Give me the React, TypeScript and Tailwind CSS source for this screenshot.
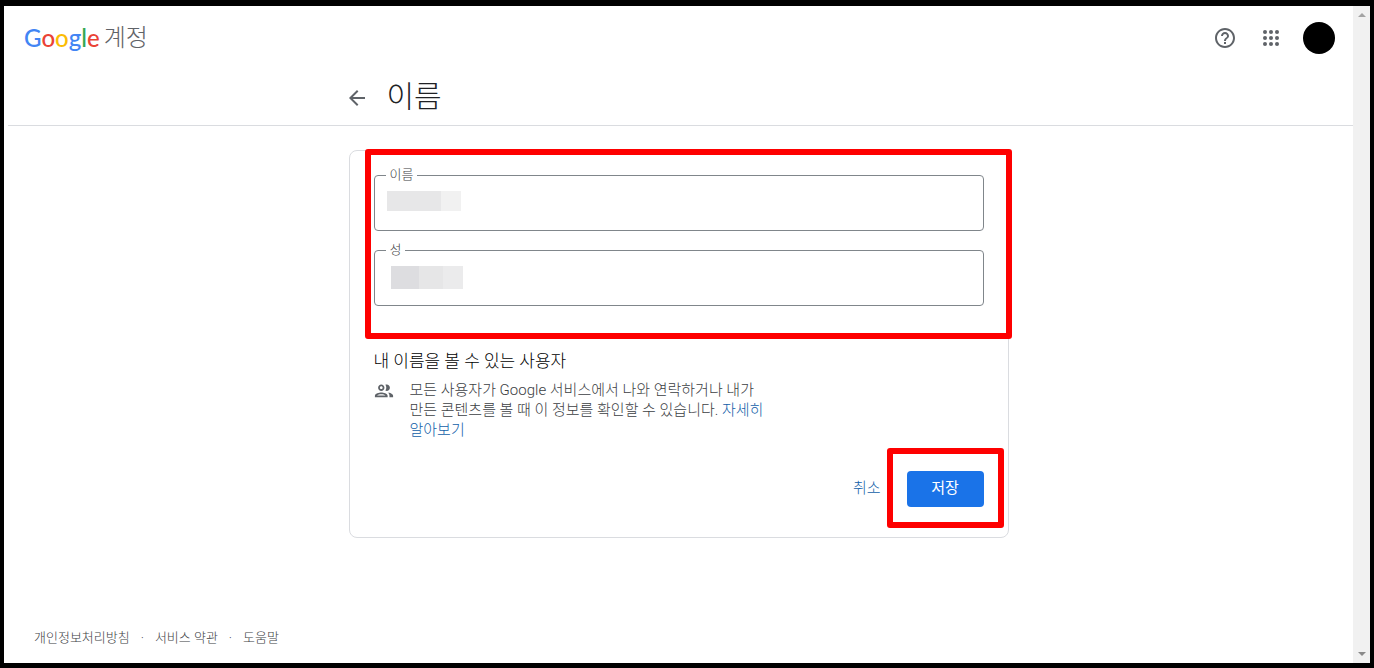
import type { ReactNode } from "react";

function Field({ id, label, children }: { id: string; label: string; children: ReactNode }) {
  return (
    <div className="relative">
      <input
        id={id}
        type="text"
        className="block h-14 w-full rounded border border-[#80868b] bg-transparent px-3 text-base text-[#202124] outline-none"
      />
      <label htmlFor={id} className="absolute -top-2 left-3 bg-white px-1 text-[13px] leading-4 font-light text-[#3c4043]">
        {label}
      </label>
      {children}
    </div>
  );
}

function HelpIcon() {
  return (
    <svg viewBox="0 0 24 24" className="size-6" fill="currentColor" aria-hidden="true">
      <path d="M11 18h2v-2h-2v2zm1-16C6.48 2 2 6.48 2 12s4.48 10 10 10 10-4.48 10-10S17.52 2 12 2zm0 18c-4.41 0-8-3.59-8-8s3.59-8 8-8 8 3.59 8 8-3.59 8-8 8zm0-14c-2.21 0-4 1.79-4 4h2c0-1.1.9-2 2-2s2 .9 2 2c0 2-3 1.75-3 5h2c0-2.25 3-2.5 3-5 0-2.21-1.79-4-4-4z" />
    </svg>
  );
}

function AppsIcon() {
  const steps = [6, 12, 18];
  return (
    <svg viewBox="0 0 24 24" className="size-6" fill="currentColor" aria-hidden="true">
      {steps.map((y) => steps.map((x) => <circle key={`${x}-${y}`} cx={x} cy={y} r="2" />))}
    </svg>
  );
}

function BackIcon() {
  return (
    <svg viewBox="0 0 24 24" className="size-6" fill="currentColor" aria-hidden="true">
      <path d="M20 11H7.83l5.59-5.59L12 4l-8 8 8 8 1.41-1.41L7.83 13H20v-2z" />
    </svg>
  );
}

function PeopleIcon() {
  return (
    <svg viewBox="1 1 22 22" className="size-5 shrink-0" fill="currentColor" aria-hidden="true">
      <path d="M9 12c1.93 0 3.5-1.57 3.5-3.5S10.93 5 9 5 5.5 6.57 5.5 8.5 7.07 12 9 12zm0-5c.83 0 1.5.67 1.5 1.5S9.83 10 9 10s-1.5-.67-1.5-1.5S8.17 7 9 7zm0 6.75c-2.34 0-7 1.17-7 3.5V19h14v-1.75c0-2.33-4.66-3.5-7-3.5zM4.34 17c.84-.58 2.87-1.25 4.66-1.25s3.82.67 4.66 1.25H4.34zm11.7-3.19c1.16.84 1.96 1.96 1.96 3.44V19h4v-1.75c0-2.02-3.5-3.17-5.96-3.44zM15 12c1.93 0 3.5-1.57 3.5-3.5S16.93 5 15 5c-.54 0-1.04.13-1.5.35.63.89 1 1.98 1 3.15s-.37 2.26-1 3.15c.46.22.96.35 1.5.35z" transform="translate(0 1)" />
    </svg>
  );
}

function Scrollbar() {
  return (
    <div className="flex w-[17px] shrink-0 flex-col items-center justify-between bg-[#f1f1f1] py-[7px]" aria-hidden="true">
      <svg viewBox="0 0 8 4" className="h-1 w-2" fill="#a3a3a3">
        <path d="M0 4 4 0l4 4z" />
      </svg>
      <svg viewBox="0 0 8 4" className="h-1 w-2" fill="#8a8a8a">
        <path d="m0 0 4 4 4-4z" />
      </svg>
    </div>
  );
}

export default function App() {
  return (
    <div className="flex min-h-screen border-4 border-t-[6px] border-b-[5px] border-black bg-white font-[Roboto,'Noto_Sans_CJK_KR',sans-serif] text-[#5f6368]">
      <div className="flex min-w-0 flex-1 flex-col">
        <header className="ml-1 border-b border-[#dadce0]">
          <div className="flex h-16 items-center justify-between pr-[18px] pl-4">
            <a href="#home" className="flex items-center gap-1">
              <span className="font-[Lato,sans-serif] text-2xl font-medium">
                <span className="text-[#4285f4]">G</span>
                <span className="text-[#ea4335]">o</span>
                <span className="text-[#fbbc05]">o</span>
                <span className="text-[#4285f4]">g</span>
                <span className="text-[#34a853]">l</span>
                <span className="text-[#ea4335]">e</span>
              </span>
              <span className="text-2xl font-light">계정</span>
            </a>
            <div className="flex items-center gap-5">
              <div className="flex items-center gap-[22px]">
                <button type="button" aria-label="도움말">
                  <HelpIcon />
                </button>
                <button type="button" aria-label="Google 앱">
                  <AppsIcon />
                </button>
              </div>
              <button type="button" aria-label="Google 계정" className="size-8 rounded-full bg-black" />
            </div>
          </div>
          <div className="mx-auto flex h-[55px] w-full max-w-[672px] items-center gap-[18px] pb-1">
            <button type="button" aria-label="뒤로" className="pt-1">
              <BackIcon />
            </button>
            <h1 className="pt-[2px] text-[30px] leading-9 font-light text-[#202124]">이름</h1>
          </div>
        </header>

        <main className="flex-1 px-4 pt-6">
          <form className="mx-auto max-w-[660px] rounded-lg border border-[#dadce0] px-6 pt-6 pb-[30px]">
            <div className="relative flex flex-col gap-[19px]">
              <Field id="given-name" label="이름">
                <div className="absolute top-4 left-[13px] flex h-5 w-[74px] bg-[#f1f1f1]">
                  <div className="w-[54px] bg-[#e7e7e8]" />
                </div>
              </Field>
              <Field id="family-name" label="성">
                <div className="absolute top-4 left-[17px] flex h-[23px] w-[72px] bg-[#ebebec]">
                  <div className="w-7 bg-[#dddde0]" />
                  <div className="w-6 bg-[#e6e6e7]" />
                </div>
              </Field>
              <div className="pointer-events-none absolute -top-[26px] -right-[28px] -bottom-[33px] -left-[9px] rounded-[3px] border-[6px] border-[#fe0000]" />
            </div>

            <h2 className="mt-[43px] text-[17px] leading-6 font-light text-black">내 이름을 볼 수 있는 사용자</h2>
            <div className="mt-[7px] flex gap-4">
              <PeopleIcon />
              <p className="max-w-[370px] text-[15px] leading-5 font-light break-keep text-[#3c4043]">
                모든 사용자가 Google 서비스에서 나와 연락하거나 내가 만든 콘텐츠를 볼 때 이 정보를 확인할 수 있습니다.{" "}
                <a href="#learn-more" className="text-[#1260a8]">
                  자세히 알아보기
                </a>
              </p>
            </div>

            <div className="mt-[31px] flex items-center justify-end gap-[26px]">
              <button type="button" className="pb-[2px] text-[15px] leading-5 font-light text-[#1260a8]">
                취소
              </button>
              <div className="relative">
                <button type="submit" className="block h-9 min-w-[77px] rounded bg-[#1a73e8] px-6 pb-[2px] text-[15px] leading-5 text-white">
                  저장
                </button>
                <div className="pointer-events-none absolute -top-[23px] -right-[20px] -bottom-[21px] -left-[20px] rounded-[3px] border-[6px] border-[#fe0000]" />
              </div>
            </div>
          </form>
        </main>

        <footer className="flex items-center gap-[11px] px-[30px] pb-[15px] text-[13px] leading-5 font-light text-[#3c4043]">
          <a href="#privacy">개인정보처리방침</a>
          <span>·</span>
          <a href="#terms">서비스 약관</a>
          <span>·</span>
          <a href="#help">도움말</a>
        </footer>
      </div>
      <Scrollbar />
    </div>
  );
}
